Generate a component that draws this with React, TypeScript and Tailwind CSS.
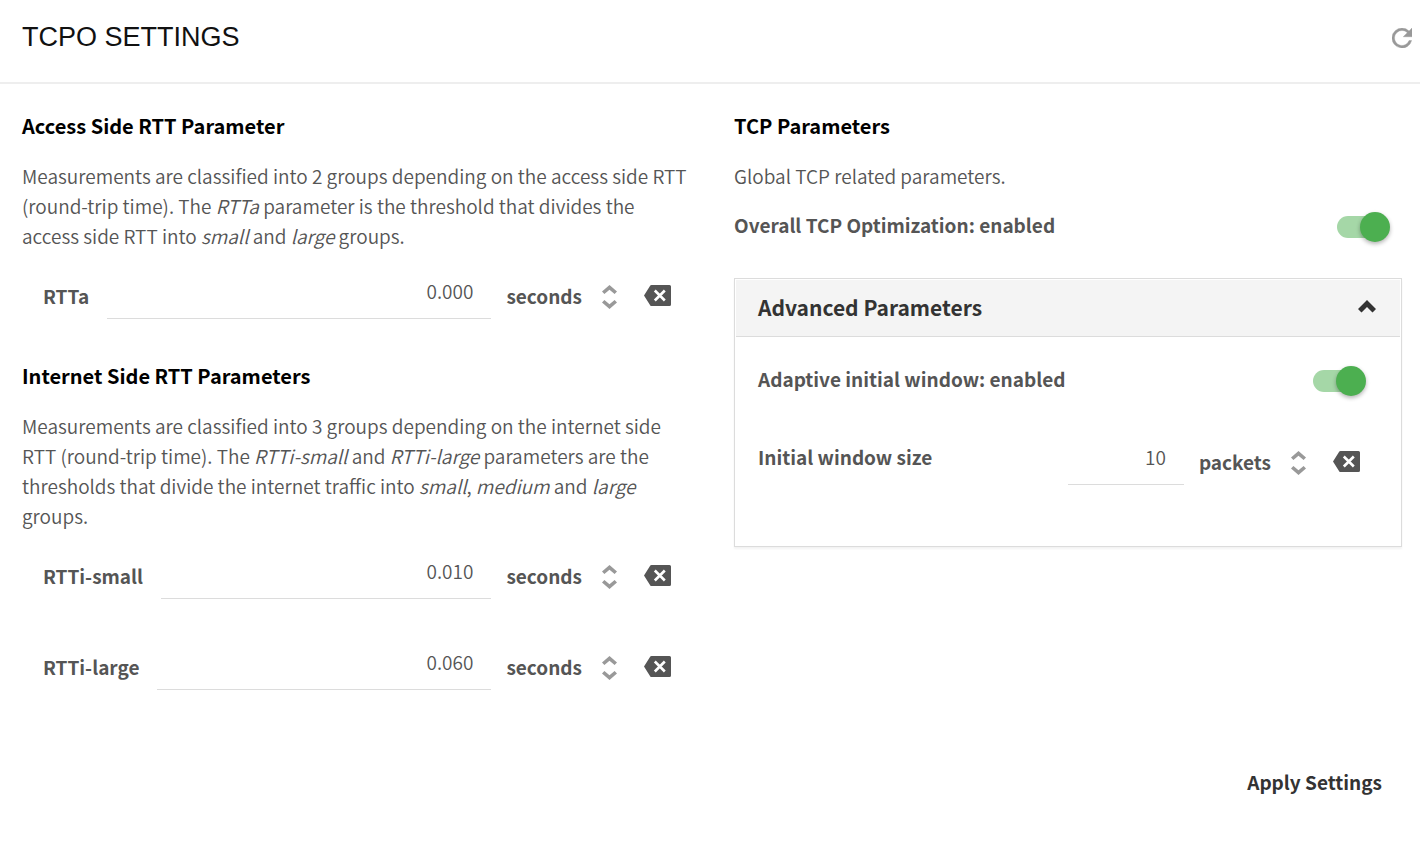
import { useState } from "react";
import type { ReactNode } from "react";

function RefreshIcon() {
  return (
    <svg width="20" height="20" viewBox="4 4 16 16" fill="currentColor" stroke="currentColor" strokeWidth="0.3" aria-hidden="true">
      <path d="M17.65 6.35A7.96 7.96 0 0 0 12 4a8 8 0 1 0 7.73 10h-2.08A6 6 0 1 1 12 6c1.66 0 3.14.69 4.22 1.78L13 11h7V4l-2.35 2.35z" />
    </svg>
  );
}

function ClearIcon() {
  return (
    <svg width="27" height="21" viewBox="0 0 27 21" aria-hidden="true">
      <path d="M7.500 0H25.500a1.500 1.500 0 0 1 1.500 1.500v18a1.500 1.500 0 0 1-1.500 1.500H7.500a1.500 1.500 0 0 1-1.200-.6L0 10.500 6.300.6A1.500 1.500 0 0 1 7.500 0z" fill="#555" />
      <path d="M10.800 5.500l10 10M20.800 5.500l-10 10" stroke="#fff" strokeWidth="2.600" />
    </svg>
  );
}

function Chevron({ down }: { down?: boolean }) {
  return (
    <svg width="15" height="9" viewBox="0 0 15 9" fill="currentColor" aria-hidden="true">
      <path d={down ? "M7.500 9L0 2.600 2.400 0l5.100 4.200L12.600 0 15 2.600z" : "M7.500 0L0 6.400 2.400 9l5.100-4.200L12.600 9 15 6.400z"} />
    </svg>
  );
}

interface NumberFieldProps {
  id: string;
  label: string;
  unit: string;
  initial: number;
  step: number;
  digits: number;
  compact?: boolean;
}

function NumberField({ id, label, unit, initial, step, digits, compact }: NumberFieldProps) {
  const [value, setValue] = useState(initial.toFixed(digits));

  function bump(delta: number) {
    setValue((v) => Math.max(0, (parseFloat(v) || 0) + delta).toFixed(digits));
  }

  return (
    <div className={compact ? "flex items-center" : "flex items-center pl-[21px] pr-[19px]"}>
      <label htmlFor={id} className={compact ? "flex-1 pb-1 font-bold" : "mr-[18px] pt-1.5 font-bold"}>
        {label}
      </label>
      <input
        id={id}
        type="text"
        inputMode="decimal"
        value={value}
        onChange={(e) => setValue(e.target.value)}
        className={`h-[52px] min-w-0 border-b border-[#dcdcdc] bg-transparent pr-[18px] pb-1 text-right outline-none focus:border-[#4caf50] ${
          compact ? "w-[116px]" : "flex-1"
        }`}
      />
      <span className="ml-[15px] pt-1.5 font-bold">{unit}</span>
      <div className="ml-5 flex flex-col gap-1.5 pt-2 text-[#999]">
        <button type="button" aria-label={`Increase ${label}`} onClick={() => bump(step)}>
          <Chevron />
        </button>
        <button type="button" aria-label={`Decrease ${label}`} onClick={() => bump(-step)}>
          <Chevron down />
        </button>
      </div>
      <button
        type="button"
        aria-label={`Clear ${label}`}
        onClick={() => setValue(initial.toFixed(digits))}
        className="ml-[27px] pt-1"
      >
        <ClearIcon />
      </button>
    </div>
  );
}

function Toggle({ name }: { name: string }) {
  const [on, setOn] = useState(true);

  return (
    <label className="flex cursor-pointer items-center justify-between font-bold">
      <span className="pb-1 leading-[26px]">
        {name}: {on ? "enabled" : "disabled"}
      </span>
      <span className="relative flex h-[30px] w-[53px] items-center">
        <input
          type="checkbox"
          checked={on}
          onChange={(e) => setOn(e.target.checked)}
          className="peer absolute inset-0 m-0 h-full w-full cursor-pointer opacity-0"
        />
        <span className="pointer-events-none h-[22px] w-[50px] rounded-full bg-gray-300 peer-checked:bg-[#a5d7a7]" />
        <span className="pointer-events-none absolute left-0 h-[30px] w-[30px] rounded-full bg-gray-100 shadow-[0_2px_4px_rgba(0,0,0,0.3)] peer-checked:right-0 peer-checked:left-auto peer-checked:bg-[#4caf50]" />
      </span>
    </label>
  );
}

function Heading({ children }: { children: ReactNode }) {
  return <h2 className="text-xl leading-[30px] font-bold text-black">{children}</h2>;
}

export default function App() {
  const [open, setOpen] = useState(true);

  return (
    <div className="min-h-screen bg-white font-['Noto_Sans_CJK_SC','Open_Sans',sans-serif] text-[19px] leading-[30px] font-[350] text-[#555]">
      <header className="flex items-center justify-between border-b-2 border-[#eee] pt-4 pr-2 pb-6 pl-[22px]">
        <h1 className="font-['Liberation_Sans',Arial,sans-serif] text-[27px] leading-[42px] font-normal text-[#111]">TCPO SETTINGS</h1>
        <button type="button" aria-label="Refresh" className="pt-0.5 text-[#999]">
          <RefreshIcon />
        </button>
      </header>

      <main className="grid grid-cols-2 gap-11 pt-[27px] pr-[18px] pl-[22px]">
        <div>
          <section>
            <Heading>Access Side RTT Parameter</Heading>
            <p className="mt-5 mb-4">
              Measurements are classified into 2 groups depending on the access side RTT (round-trip time). The{" "}
              <em>RTTa</em> parameter is the threshold that divides the access side RTT into <em>small</em> and{" "}
              <em>large</em> groups.
            </p>
            <NumberField id="rtta" label="RTTa" unit="seconds" initial={0} step={0.001} digits={3} />
          </section>
          <section className="mt-[42px]">
            <Heading>Internet Side RTT Parameters</Heading>
            <p className="mt-5 mb-4">
              Measurements are classified into 3 groups depending on the internet side RTT (round-trip time). The{" "}
              <em>RTTi-small</em> and <em>RTTi-large</em> parameters are the thresholds that divide the internet
              traffic into <em>small</em>, <em>medium</em> and <em>large</em> groups.
            </p>
            <div className="flex flex-col gap-[39px]">
              <NumberField id="rtti-small" label="RTTi-small" unit="seconds" initial={0.01} step={0.001} digits={3} />
              <NumberField id="rtti-large" label="RTTi-large" unit="seconds" initial={0.06} step={0.001} digits={3} />
            </div>
          </section>
        </div>

        <section>
          <Heading>TCP Parameters</Heading>
          <p className="mt-5 mb-[21px]">Global TCP related parameters.</p>
          <div className="pr-3">
            <Toggle name="Overall TCP Optimization" />
          </div>
          <div className="mt-9 border border-[#dcdcdc] p-px shadow-[0_2px_2px_rgba(0,0,0,0.05)]">
            <button
              type="button"
              aria-expanded={open}
              onClick={() => setOpen(!open)}
              className="flex w-full items-center justify-between border-b border-[#dcdcdc] bg-[#f4f4f4] pt-3 pr-6 pb-[14px] pl-[22px] text-[21px] font-bold text-[#333]"
            >
              Advanced Parameters
              <svg
                width="18"
                height="13"
                viewBox="0 0 18 13"
                fill="currentColor"
                className={open ? "mb-0.5" : "mb-0.5 rotate-180"}
                aria-hidden="true"
              >
                <path d="M9 0L0 9l3.500 3.500L9 7l5.500 5.500L18 9z" />
              </svg>
            </button>
            {open && (
              <div className="px-[22px] pt-[29px] pb-[60px]">
                <div className="pr-3">
                  <Toggle name="Adaptive initial window" />
                </div>
                <div className="mt-[37px] pr-[18px]">
                  <NumberField id="window-size" label="Initial window size" unit="packets" initial={10} step={1} digits={0} compact />
                </div>
              </div>
            )}
          </div>
        </section>
      </main>

      <footer className="mt-[77px] flex justify-end pr-[38px] pb-10">
        <button type="button" className="font-bold text-[#333]">
          Apply Settings
        </button>
      </footer>
    </div>
  );
}
